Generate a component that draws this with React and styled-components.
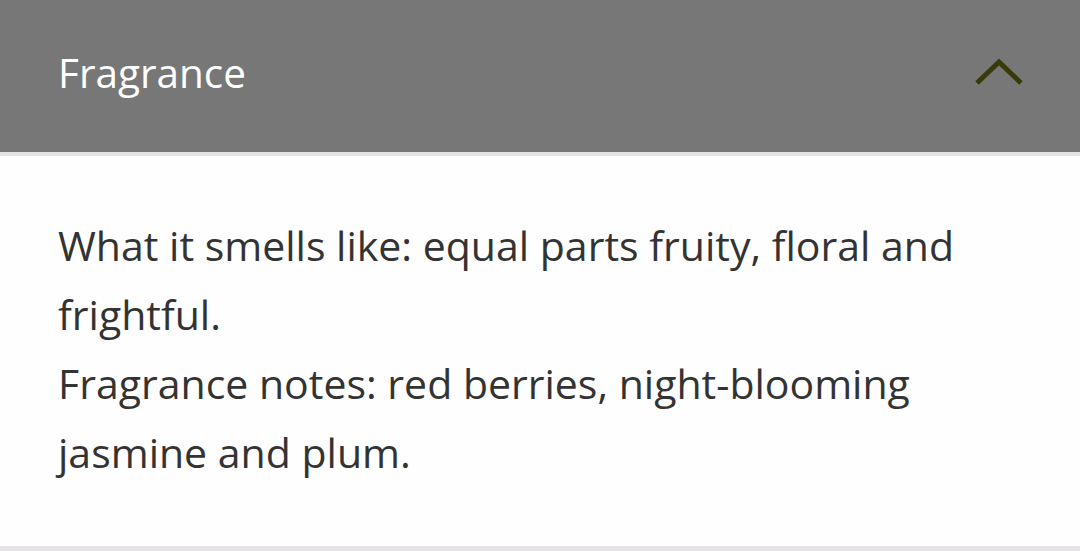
import styled, { createGlobalStyle } from 'styled-components';

const GlobalStyle = createGlobalStyle`
  body {
    margin: 0;
    background: #fff;
    font-family: 'Open Sans', 'Noto Sans', sans-serif;
  }
`;

const Panel = styled.section`
  width: 1080px;
  height: 551px;
  display: flex;
  flex-direction: column;
  background: #fefefe;
  border-bottom: 5px solid #e6e3e6;
  box-sizing: border-box;
`;

const Header = styled.button`
  height: 156px;
  display: flex;
  align-items: center;
  justify-content: space-between;
  padding: 0 58px 8px 58px;
  border: none;
  border-bottom: 4px solid #e4e2e4;
  background: #777777;
  box-sizing: border-box;
  cursor: pointer;
`;

const Title = styled.span`
  color: #ffffff;
  font-family: 'Open Sans', 'Noto Sans', sans-serif;
  font-size: 40.5px;
`;

const Body = styled.div`
  padding: 55px 58px 0 58px;
  color: #333333;
  font-size: 41px;
  line-height: 69px;
  font-variant-ligatures: none;
`;

const Line = styled.p`
  margin: 0;
`;

const Chevron = () => (
  <svg width="52" height="30" viewBox="0 0 52 30" style={{ marginRight: '-3px' }}>
    <polyline
      points="4,26 26,5 48,26"
      fill="none"
      stroke="#393a0c"
      strokeWidth="5"
    />
  </svg>
);

export default function App() {
  return (
    <>
      <GlobalStyle />
      <Panel>
        <Header>
          <Title>Fragrance</Title>
          <Chevron />
        </Header>
        <Body>
          <Line>What it smells like: equal parts fruity, floral and frightful.</Line>
          <Line>Fragrance notes: red berries, night-blooming jasmine and plum.</Line>
        </Body>
      </Panel>
    </>
  );
}
